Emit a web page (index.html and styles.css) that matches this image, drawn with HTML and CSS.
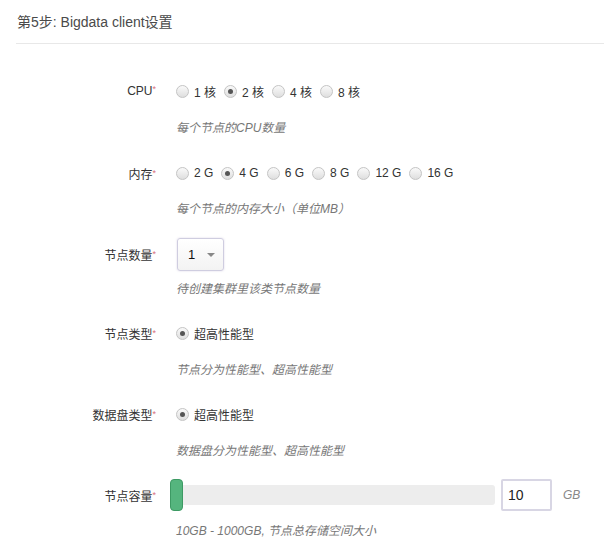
FILE: index.html
```html
<!DOCTYPE html>
<html lang="zh">
<head>
<meta charset="utf-8">
<title>Bigdata client设置</title>
<link rel="stylesheet" href="styles.css">
</head>
<body>
<div class="page">
  <div class="header">第5步: Bigdata client设置</div>
  <div class="form">
    <div class="group">
      <div class="row">
        <div class="label">CPU<span class="req">*</span></div>
        <div class="options">
          <label class="opt"><span class="radio"></span>1 核</label>
          <label class="opt"><span class="radio on"></span>2 核</label>
          <label class="opt"><span class="radio"></span>4 核</label>
          <label class="opt"><span class="radio"></span>8 核</label>
        </div>
      </div>
      <div class="hint">每个节点的CPU数量</div>
    </div>
    <div class="group">
      <div class="row">
        <div class="label">内存<span class="req">*</span></div>
        <div class="options">
          <label class="opt"><span class="radio"></span>2 G</label>
          <label class="opt"><span class="radio on"></span>4 G</label>
          <label class="opt"><span class="radio"></span>6 G</label>
          <label class="opt"><span class="radio"></span>8 G</label>
          <label class="opt"><span class="radio"></span>12 G</label>
          <label class="opt"><span class="radio"></span>16 G</label>
        </div>
      </div>
      <div class="hint hint-mem">每个节点的内存大小（单位MB）</div>
    </div>
    <div class="group group-select">
      <div class="row">
        <div class="label">节点数量<span class="req">*</span></div>
        <div class="select"><span class="select-val">1</span><span class="caret"></span></div>
      </div>
      <div class="hint hint-select">待创建集群里该类节点数量</div>
    </div>
    <div class="group">
      <div class="row">
        <div class="label">节点类型<span class="req">*</span></div>
        <div class="options">
          <label class="opt"><span class="radio on"></span>超高性能型</label>
        </div>
      </div>
      <div class="hint hint-type">节点分为性能型、超高性能型</div>
    </div>
    <div class="group">
      <div class="row">
        <div class="label">数据盘类型<span class="req">*</span></div>
        <div class="options">
          <label class="opt"><span class="radio on"></span>超高性能型</label>
        </div>
      </div>
      <div class="hint hint-type">数据盘分为性能型、超高性能型</div>
    </div>
    <div class="group">
      <div class="row">
        <div class="label">节点容量<span class="req">*</span></div>
        <div class="slider-wrap">
          <div class="slider"><span class="handle"></span></div>
          <div class="num-input">10</div>
          <span class="unit">GB</span>
        </div>
      </div>
      <div class="hint hint-slider">10GB - 1000GB, 节点总存储空间大小</div>
    </div>
  </div>
</div>
</body>
</html>
```

FILE: styles.css
```css
html, body {
  margin: 0;
  padding: 0;
  background: #fff;
}
body {
  font-family: "Liberation Sans", Arial, "Noto Sans CJK SC", sans-serif;
  font-size: 12px;
  color: #333;
}
.page {
  padding-left: 16px;
  width: 588px;
}
.header {
  font-size: 14px;
  line-height: 20px;
  color: #4a4a4a;
  padding: 12px 0 11px 1px;
  border-bottom: 1px solid #e8e8e8;
}
.form {
  padding-top: 30px;
}
.group {
  margin-bottom: 18px;
}
.group-select {
  margin-bottom: 17px;
}
.row {
  display: flex;
  align-items: center;
  height: 34px;
}
.label {
  width: 140px;
  text-align: right;
  margin-right: 20px;
  flex: none;
  color: #333;
}
.req {
  color: #d9707c;
  font-size: 9px;
  vertical-align: 3px;
}
.options {
  display: flex;
  align-items: center;
  gap: 8px;
}
.opt {
  display: flex;
  align-items: center;
  color: #333;
}
.radio {
  width: 11px;
  height: 11px;
  border-radius: 50%;
  border: 1px solid #c4c4c4;
  background: linear-gradient(#fafafa, #dedede);
  margin-right: 5px;
  position: relative;
  box-sizing: content-box;
}
.radio.on::after {
  content: "";
  position: absolute;
  left: 3px;
  top: 3px;
  width: 5px;
  height: 5px;
  border-radius: 50%;
  background: #555;
}
.hint {
  margin-left: 160px;
  margin-top: 10px;
  line-height: 20px;
  font-style: italic;
  color: #777;
}
.hint-mem {
  margin-top: 9px;
}
.hint-select {
  margin-top: 8px;
}
.hint-type {
  margin-top: 10px;
}
.hint-slider {
  margin-top: 9px;
}
.group:has(.hint-type) {
  margin-bottom: 17px;
}
.select {
  width: 45px;
  height: 31px;
  border: 1px solid #cfcde0;
  border-radius: 3px;
  background: linear-gradient(#ffffff, #f3f3f3);
  box-shadow: 0 0 2px rgba(140, 130, 180, 0.35);
  display: flex;
  align-items: center;
  box-sizing: content-box;
  margin-left: 1px;
}
.select-val {
  font-size: 13px;
  color: #111;
  margin-left: 10px;
}
.caret {
  width: 0;
  height: 0;
  border-left: 4px solid transparent;
  border-right: 4px solid transparent;
  border-top: 4px solid #888;
  margin-left: 12px;
  margin-top: 1px;
}
.slider-wrap {
  display: flex;
  align-items: center;
  margin-left: -6px;
}
.slider {
  width: 325px;
  height: 20px;
  background: #ededed;
  border-radius: 3px;
  position: relative;
}
.handle {
  position: absolute;
  left: 0;
  top: -6px;
  width: 11px;
  height: 30px;
  background: #55b57e;
  border: 1px solid #3d9a64;
  border-radius: 4px;
}
.num-input {
  width: 42px;
  height: 28px;
  border: 2px solid #d8d6e4;
  border-radius: 2px;
  margin-left: 6px;
  padding-left: 5px;
  font-size: 14px;
  line-height: 28px;
  color: #222;
}
.unit {
  margin-left: 11px;
  font-style: italic;
  color: #888;
  font-size: 12px;
}
```
